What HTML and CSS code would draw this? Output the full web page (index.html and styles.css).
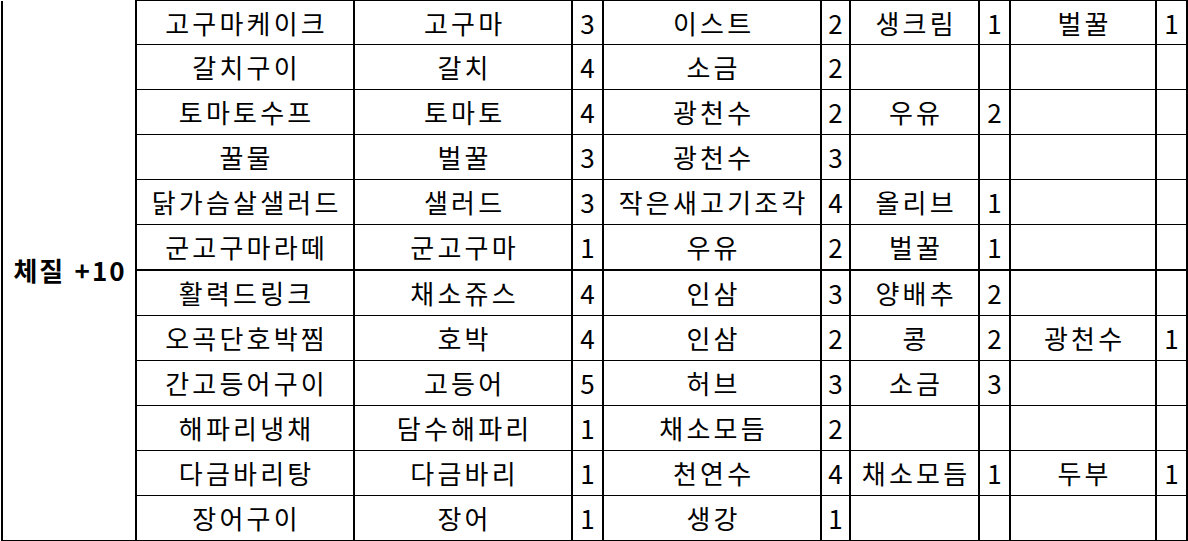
FILE: index.html
```html
<!DOCTYPE html>
<html lang="ko">
<head>
<meta charset="utf-8">
<link rel="stylesheet" href="styles.css">
</head>
<body>
<table class="grid">
<colgroup>
<col class="c-stat"><col class="c-name"><col class="c-ing"><col class="c-num"><col class="c-ing"><col class="c-num2"><col class="c-ing3"><col class="c-num"><col class="c-ing4"><col class="c-num3">
</colgroup>
<tbody>
<tr class="first"><td class="stat" rowspan="12">체질 +10</td><td>고구마케이크</td><td>고구마</td><td>3</td><td>이스트</td><td>2</td><td>생크림</td><td>1</td><td>벌꿀</td><td>1</td></tr>
<tr><td>갈치구이</td><td>갈치</td><td>4</td><td>소금</td><td>2</td><td></td><td></td><td></td><td></td></tr>
<tr><td>토마토수프</td><td>토마토</td><td>4</td><td>광천수</td><td>2</td><td>우유</td><td>2</td><td></td><td></td></tr>
<tr><td>꿀물</td><td>벌꿀</td><td>3</td><td>광천수</td><td>3</td><td></td><td></td><td></td><td></td></tr>
<tr><td>닭가슴살샐러드</td><td>샐러드</td><td>3</td><td>작은새고기조각</td><td>4</td><td>올리브</td><td>1</td><td></td><td></td></tr>
<tr class="split"><td>군고구마라떼</td><td>군고구마</td><td>1</td><td>우유</td><td>2</td><td>벌꿀</td><td>1</td><td></td><td></td></tr>
<tr><td>활력드링크</td><td>채소쥬스</td><td>4</td><td>인삼</td><td>3</td><td>양배추</td><td>2</td><td></td><td></td></tr>
<tr><td>오곡단호박찜</td><td>호박</td><td>4</td><td>인삼</td><td>2</td><td>콩</td><td>2</td><td>광천수</td><td>1</td></tr>
<tr><td>간고등어구이</td><td>고등어</td><td>5</td><td>허브</td><td>3</td><td>소금</td><td>3</td><td></td><td></td></tr>
<tr><td>해파리냉채</td><td>담수해파리</td><td>1</td><td>채소모듬</td><td>2</td><td></td><td></td><td></td><td></td></tr>
<tr><td>다금바리탕</td><td>다금바리</td><td>1</td><td>천연수</td><td>4</td><td>채소모듬</td><td>1</td><td>두부</td><td>1</td></tr>
<tr><td>장어구이</td><td>장어</td><td>1</td><td>생강</td><td>1</td><td></td><td></td><td></td><td></td></tr>
</tbody>
</table>
</body>
</html>
```
FILE: styles.css
```css
html, body {
  margin: 0;
  padding: 0;
  background: #fff;
}
.grid {
  border-collapse: collapse;
  table-layout: fixed;
  width: 1186px;
  margin-left: 1px;
  font-family: "Noto Sans CJK KR", "Noto Sans", sans-serif;
  font-size: 26px;
  color: #000;
  border-bottom: 2px solid #000;
  border-right: 2px solid #000;
}
.c-stat { width: 134px; }
.c-name { width: 218px; }
.c-ing { width: 218px; }
.c-num { width: 31px; }
.c-num2 { width: 29px; }
.c-ing3 { width: 129px; }
.c-ing4 { width: 146px; }
.c-num3 { width: 31px; }
.grid td {
  height: 44px;
  padding: 0;
  text-align: center;
  vertical-align: middle;
  white-space: nowrap;
  overflow: hidden;
  border-left: 2px solid #000;
  border-right: 2px solid #000;
  border-top: 1px solid #000;
  border-bottom: 1px solid #000;
  line-height: 1;
  letter-spacing: 3.2px;
  text-indent: 3.2px;
}
.grid tr.first td {
  height: 43px;
}
.grid td.stat {
  font-weight: bold;
  font-size: 26px;
  letter-spacing: 2px;
  text-indent: 2px;
  border-top: none;
  border-bottom: 2px solid #000;
}
.grid tr.split td {
  border-bottom: 2px solid #000;
}
```
